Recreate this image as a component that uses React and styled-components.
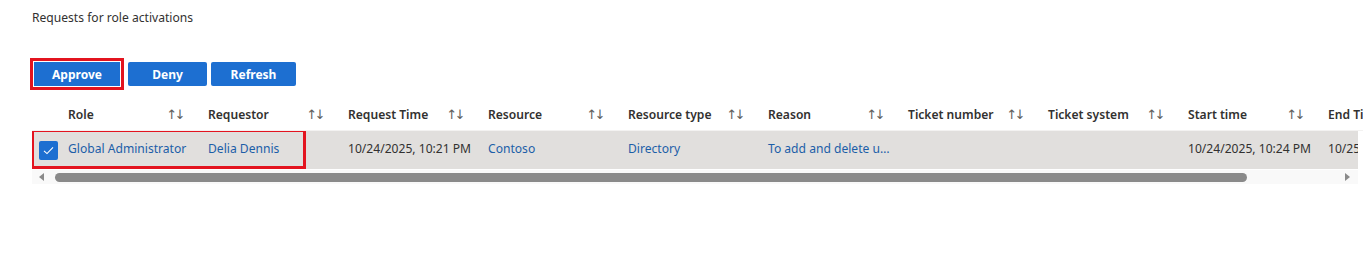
import React from "react";
import styled, { createGlobalStyle } from "styled-components";

const Global = createGlobalStyle`
  html, body { margin: 0; padding: 0; background: #ffffff; }
  body { font-family: "Noto Sans", "Open Sans", Arial, sans-serif; color: #323130; overflow: hidden; }
`;

const Page = styled.div`
  width: 1363px;
  height: 266px;
  overflow: hidden;
  padding: 9px 0 0 32px;
  box-sizing: border-box;
`;

const Title = styled.div`
  font-size: 12.1px;
  line-height: 18px;
  color: #323130;
`;

const Toolbar = styled.div`
  display: flex;
  align-items: center;
  margin-top: 35px;
  padding-left: 2px;
`;

const Button = styled.button`
  height: 24px;
  width: ${(p) => p.$w}px;
  margin-right: ${(p) => p.$mr}px;
  border: none;
  border-radius: ${(p) => (p.$marked ? "0" : "2px")};
  background: #1d6fd1;
  color: #ffffff;
  font-family: "Noto Sans", "Open Sans", Arial, sans-serif;
  font-size: 12px;
  font-weight: 700;
  padding: 0;
  cursor: pointer;
  outline: ${(p) => (p.$marked ? "3px solid #e3141f" : "none")};
  outline-offset: 1px;
`;

const HeaderClip = styled.div`
  margin-top: 14px;
  overflow: hidden;
`;

const BodyClip = styled.div`
  position: relative;
  width: 1326px;
  overflow: hidden;
`;

const Row = styled.div`
  display: grid;
  grid-template-columns: 28px repeat(10, 140px);
  width: 1428px;
  height: ${(p) => p.$h}px;
  align-items: center;
  background: ${(p) => p.$bg || "transparent"};
  border-bottom: ${(p) => (p.$line ? "1px solid #f3f2f1" : "none")};
`;

const HeadCell = styled.div`
  display: flex;
  align-items: center;
  justify-content: space-between;
  padding: 0 15px 1px 8px;
  font-size: 12.1px;
  font-weight: 600;
  color: #323130;
  white-space: nowrap;
`;

const SortIcon = styled.span`
  font-family: "DejaVu Sans", sans-serif;
  font-size: 13px;
  font-weight: 400;
  color: #605e5c;
  letter-spacing: -2.5px;
  padding-right: 2px;
`;

const Cell = styled.div`
  padding: 0 8px 3px 8px;
  font-size: 12.1px;
  color: ${(p) => (p.$link ? "#1c5ea8" : "#323130")};
  white-space: nowrap;
  overflow: ${(p) => (p.$clip ? "hidden" : "visible")};
  text-overflow: ${(p) => (p.$clip ? "ellipsis" : "clip")};
`;

const CheckCell = styled.div`
  display: flex;
  align-items: center;
  padding-left: 7px;
`;

const CheckBox = styled.div`
  width: 19px;
  height: 19px;
  border-radius: 2px;
  background: #1d6fd1;
  display: flex;
  align-items: center;
  justify-content: center;
`;

const Marker = styled.div`
  position: absolute;
  left: -1px;
  top: -2px;
  width: 269px;
  height: 34px;
  border: 3px solid #e3141f;
  pointer-events: none;
`;

const ScrollBar = styled.div`
  display: flex;
  align-items: center;
  height: 14px;
  margin-top: 1px;
  background: #f9f9f9;
  padding: 0 8px 0 7px;
`;

const Arrow = styled.div`
  width: 0;
  height: 0;
  border-top: 4px solid transparent;
  border-bottom: 4px solid transparent;
  ${(p) =>
    p.$dir === "left"
      ? "border-right: 5px solid #8a8a8a;"
      : "border-left: 5px solid #8a8a8a;"}
`;

const Thumb = styled.div`
  width: 1192px;
  height: 9px;
  border-radius: 5px;
  background: #8a8a8a;
  margin-left: 11px;
`;

const Spacer = styled.div`
  flex: 1;
`;

const columns = [
  "Role",
  "Requestor",
  "Request Time",
  "Resource",
  "Resource type",
  "Reason",
  "Ticket number",
  "Ticket system",
  "Start time",
  "End Time",
];

const row = [
  { v: "Global Administrator", link: true },
  { v: "Delia Dennis", link: true },
  { v: "10/24/2025, 10:21 PM" },
  { v: "Contoso", link: true },
  { v: "Directory", link: true },
  { v: "To add and delete users", link: true, clip: true },
  { v: "" },
  { v: "" },
  { v: "10/24/2025, 10:24 PM" },
  { v: "10/25/2025, 6:24 AM" },
];

export default function App() {
  return (
    <>
      <Global />
      <Page>
        <Title>Requests for role activations</Title>
        <Toolbar>
          <Button $w={86} $mr={8} $marked>
            Approve
          </Button>
          <Button $w={79} $mr={4}>
            Deny
          </Button>
          <Button $w={85} $mr={0}>
            Refresh
          </Button>
        </Toolbar>
        <HeaderClip>
          <Row $h={30} $line>
            <div />
            {columns.map((c) => (
              <HeadCell key={c}>
                <span>{c}</span>
                <SortIcon>↑↓</SortIcon>
              </HeadCell>
            ))}
          </Row>
        </HeaderClip>
        <BodyClip>
          <Row $h={38} $bg="#e1dfdd">
            <CheckCell>
              <CheckBox>
                <svg width="13" height="13" viewBox="0 0 13 13">
                  <path
                    d="M2 6.8 L5 9.6 L11 3.4"
                    fill="none"
                    stroke="#ffffff"
                    strokeWidth="1.1"
                  />
                </svg>
              </CheckBox>
            </CheckCell>
            {row.map((c, i) => (
              <Cell key={i} $link={c.link} $clip={c.clip}>
                {c.v}
              </Cell>
            ))}
          </Row>
          <Marker />
          <ScrollBar>
            <Arrow $dir="left" />
            <Thumb />
            <Spacer />
            <Arrow $dir="right" />
          </ScrollBar>
        </BodyClip>
      </Page>
    </>
  );
}
